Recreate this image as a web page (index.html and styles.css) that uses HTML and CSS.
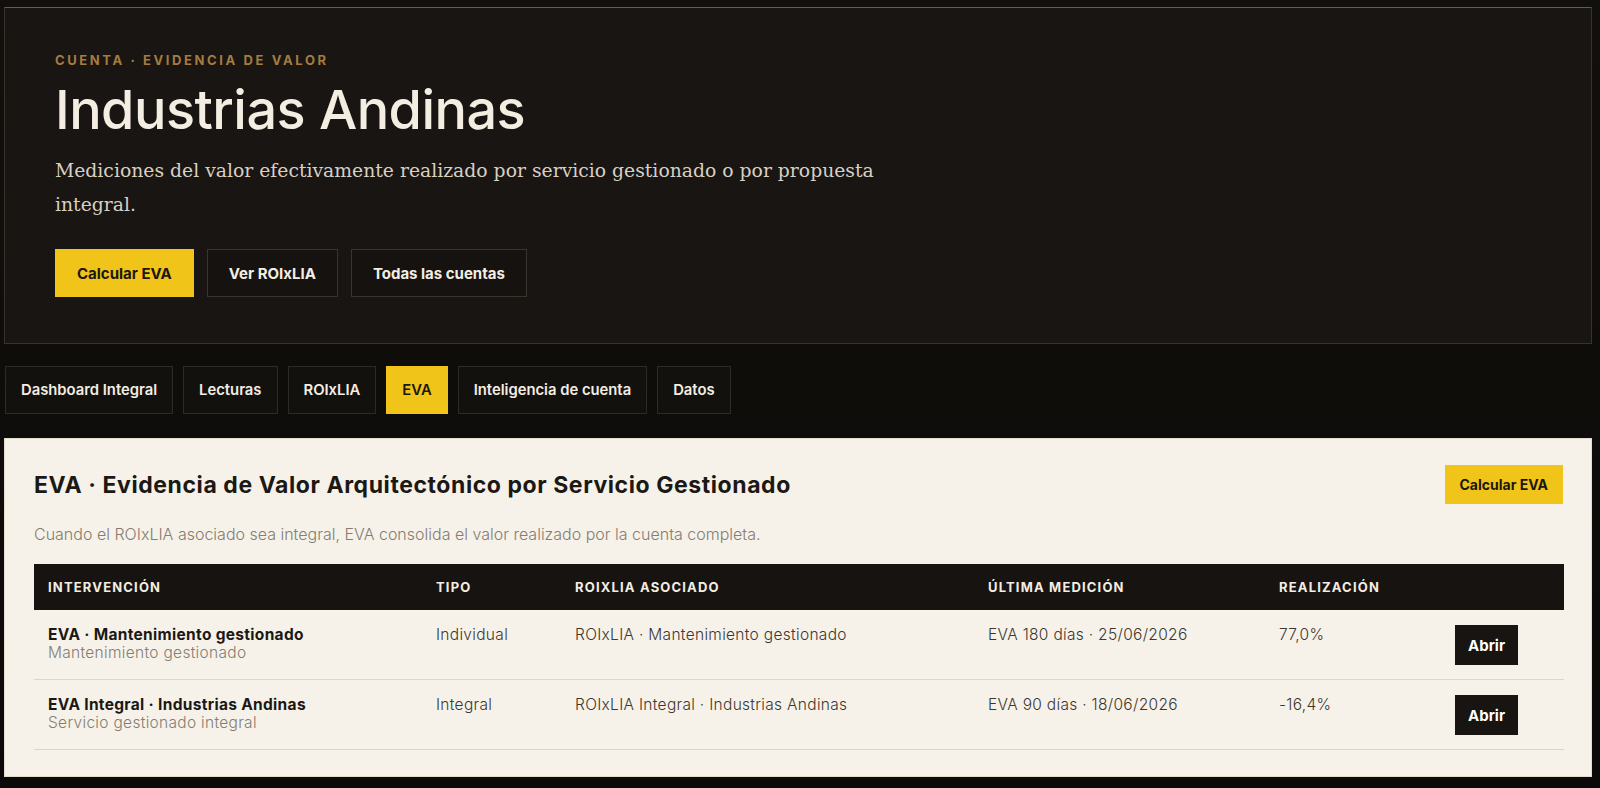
FILE: index.html
```html
<!DOCTYPE html>
<html lang="es">
<head>
  <meta charset="UTF-8" />
  <title>Industrias Andinas – EVA</title>
  <meta name="viewport" content="width=device-width, initial-scale=1.0" />
  <link rel="stylesheet" href="styles.css">
</head>
<body>
  <div class="page">

    <!-- Hero -->
    <section class="hero">
      <div class="eyebrow">Cuenta · Evidencia de valor</div>
      <h1>Industrias Andinas</h1>
      <p class="lead">Mediciones del valor efectivamente realizado por servicio gestionado o por propuesta integral.</p>
      <div class="actions">
        <button class="btn btn-primary">Calcular EVA</button>
        <button class="btn btn-dark">Ver ROIxLIA</button>
        <button class="btn btn-dark">Todas las cuentas</button>
      </div>
    </section>

    <!-- Tabs -->
    <nav class="tabs">
      <a class="tab">Dashboard Integral</a>
      <a class="tab">Lecturas</a>
      <a class="tab">ROIxLIA</a>
      <a class="tab active">EVA</a>
      <a class="tab">Inteligencia de cuenta</a>
      <a class="tab">Datos</a>
    </nav>

    <!-- EVA panel -->
    <section class="panel">
      <div class="panel-head">
        <h2>EVA · Evidencia de Valor Arquitectónico por Servicio Gestionado</h2>
        <button class="btn btn-primary btn-sm">Calcular EVA</button>
      </div>
      <p class="note">Cuando el ROIxLIA asociado sea integral, EVA consolida el valor realizado por la cuenta completa.</p>

      <table>
        <colgroup>
          <col class="c-int">
          <col class="c-tipo">
          <col class="c-roi">
          <col class="c-med">
          <col class="c-real">
          <col class="c-act">
        </colgroup>
        <thead>
          <tr>
            <th>Intervención</th>
            <th>Tipo</th>
            <th>ROIxLIA asociado</th>
            <th>Última medición</th>
            <th>Realización</th>
            <th></th>
          </tr>
        </thead>
        <tbody>
          <tr>
            <td>
              <div class="row-title">EVA · Mantenimiento gestionado</div>
              <div class="row-sub">Mantenimiento gestionado</div>
            </td>
            <td>Individual</td>
            <td>ROIxLIA · Mantenimiento gestionado</td>
            <td>EVA 180 días · 25/06/2026</td>
            <td>77,0%</td>
            <td><button class="btn-open">Abrir</button></td>
          </tr>
          <tr>
            <td>
              <div class="row-title">EVA Integral · Industrias Andinas</div>
              <div class="row-sub">Servicio gestionado integral</div>
            </td>
            <td>Integral</td>
            <td>ROIxLIA Integral · Industrias Andinas</td>
            <td>EVA 90 días · 18/06/2026</td>
            <td>-16,4%</td>
            <td><button class="btn-open">Abrir</button></td>
          </tr>
        </tbody>
      </table>
    </section>

  </div>
</body>
</html>
```

FILE: styles.css
```css
* {
  box-sizing: border-box;
}
html, body {
  margin: 0;
  padding: 0;
}
body {
  font-family: Inter, "Noto Sans", sans-serif;
  background: linear-gradient(#12100d, #0c0a08);
  color: #f3ede2;
  min-height: 788px;
}
.page {
  padding: 7px 8px 10px 4px;
}

/* Hero */
.hero {
  background: #181512;
  border: 1px solid #3a3128;
  border-top-color: #6a5a47;
  padding: 44px 50px 46px;
}
.eyebrow {
  font-size: 13px;
  line-height: 16px;
  font-weight: 700;
  letter-spacing: 0.2em;
  text-transform: uppercase;
  color: #a57c3e;
}
.hero h1 {
  margin: 12px 0 0;
  font-size: 54px;
  line-height: 1.1;
  font-weight: 500;
  letter-spacing: -0.01em;
  color: #f3ede2;
}
.lead {
  margin: 15px 0 0;
  max-width: 880px;
  font-family: "DejaVu Serif", serif;
  font-size: 18.8px;
  line-height: 34px;
  color: #d8d0c3;
}
.actions {
  display: flex;
  gap: 13px;
  margin-top: 27px;
}
.btn {
  font-family: inherit;
  font-size: 15px;
  font-weight: 700;
  height: 48px;
  padding: 0 21px;
  border-radius: 0;
  cursor: pointer;
}
.btn-primary {
  background: #f0c419;
  color: #1c1710;
  border: 1px solid #f0c419;
}
.btn-dark {
  background: #15120f;
  color: #f3ede2;
  border: 1px solid #3a342c;
}
.btn-sm {
  height: 39px;
  font-size: 14px;
  padding: 0 14px;
}

/* Tabs */
.tabs {
  display: flex;
  gap: 10px;
  margin: 22px 0 24px 1px;
}
.tab {
  display: flex;
  align-items: center;
  height: 48px;
  padding: 0 15px;
  background: #13110e;
  border: 1px solid #2f2a24;
  font-size: 14.8px;
  font-weight: 600;
  color: #f3ede2;
  cursor: pointer;
}
.tab.active {
  background: #f0c419;
  border-color: #f0c419;
  color: #1c1710;
}

/* Panel */
.panel {
  background: #f6f2ea;
  border: 1px solid #e3dccf;
  padding: 26px 28px 26px 29px;
  color: #1c1814;
}
.panel-head {
  display: flex;
  justify-content: space-between;
  align-items: center;
}
.panel h2 {
  margin: 0;
  font-size: 23px;
  font-weight: 700;
  letter-spacing: 0.025em;
}
.note {
  margin: 19px 0 19px;
  font-size: 16px;
  line-height: 22px;
  font-weight: 300;
  color: #857d71;
}
table {
  width: 100%;
  border-collapse: collapse;
  table-layout: fixed;
}
.c-int { width: 388px; }
.c-tipo { width: 139px; }
.c-roi { width: 413px; }
.c-med { width: 291px; }
.c-real { width: 176px; }
.c-act { width: 123px; }
th {
  background: #161310;
  color: #f3ede2;
  text-align: left;
  height: 46px;
  padding: 0 14px;
  font-size: 13px;
  font-weight: 700;
  letter-spacing: 0.09em;
  text-transform: uppercase;
}
td {
  vertical-align: top;
  padding: 15px 14px 14px;
  border-bottom: 1px solid #ddd5c8;
  font-size: 15.5px;
  line-height: 18px;
  font-weight: 300;
  letter-spacing: 0.02em;
  color: #3d372f;
}
td:not(:last-child) {
  padding-top: 16px;
}
.row-title {
  font-weight: 700;
  color: #1c1814;
}
.row-sub {
  color: #857d71;
}
.btn-open {
  height: 40px;
  padding: 0 13px;
  background: #171411;
  color: #fff;
  border: none;
  border-radius: 0;
  font-family: inherit;
  font-size: 15px;
  font-weight: 700;
  cursor: pointer;
}
```
